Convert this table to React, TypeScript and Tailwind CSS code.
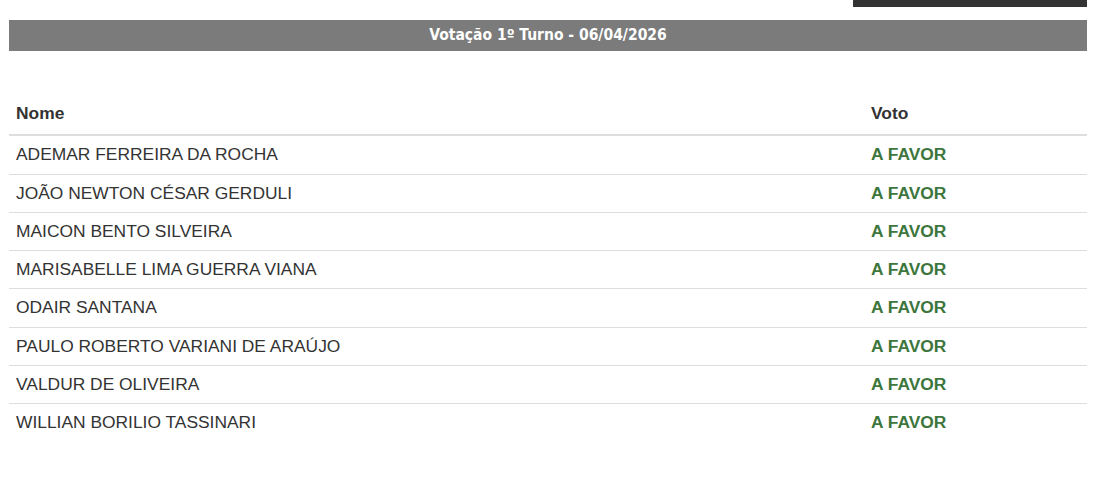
import React from "react";

const rows = [
  "ADEMAR FERREIRA DA ROCHA",
  "JOÃO NEWTON CÉSAR GERDULI",
  "MAICON BENTO SILVEIRA",
  "MARISABELLE LIMA GUERRA VIANA",
  "ODAIR SANTANA",
  "PAULO ROBERTO VARIANI DE ARAÚJO",
  "VALDUR DE OLIVEIRA",
  "WILLIAN BORILIO TASSINARI",
];

export default function App() {
  return (
    <div className="w-[1109px] h-[498px] bg-white overflow-hidden" style={{ fontFamily: '"Liberation Sans", Arial, sans-serif' }}>
      <div className="px-[9px] pr-[22px]">
        <div className="flex justify-end">
          <div className="w-[234px] h-[7px] bg-[#333333]" />
        </div>
        <div
          className="mt-[13px] h-[31px] bg-[#7b7b7b] flex items-center justify-center text-white font-bold text-[15.5px]"
          style={{ fontFamily: '"DejaVu Sans Condensed", "DejaVu Sans", sans-serif' }}
        >
          Votação 1º Turno - 06/04/2026
        </div>
        <table className="mt-[44px] w-full border-collapse text-[17.4px] text-[#333333] leading-[21.3px]">
          <thead>
            <tr>
              <th className="text-left font-bold px-[7px] pt-[8px] pb-[10px] border-b-2 border-[#dddddd]">Nome</th>
              <th className="text-left font-bold px-[7px] pt-[8px] pb-[10px] border-b-2 border-[#dddddd] w-[223px]">Voto</th>
            </tr>
          </thead>
          <tbody>
            {rows.map((n, i) => (
              <tr key={n}>
                <td className={`px-[7px] py-[8px] ${i > 0 ? "border-t border-[#dddddd]" : ""}`}>{n}</td>
                <td className={`px-[7px] py-[8px] font-bold text-[#3d763d] ${i > 0 ? "border-t border-[#dddddd]" : ""}`}>A FAVOR</td>
              </tr>
            ))}
          </tbody>
        </table>
      </div>
    </div>
  );
}
